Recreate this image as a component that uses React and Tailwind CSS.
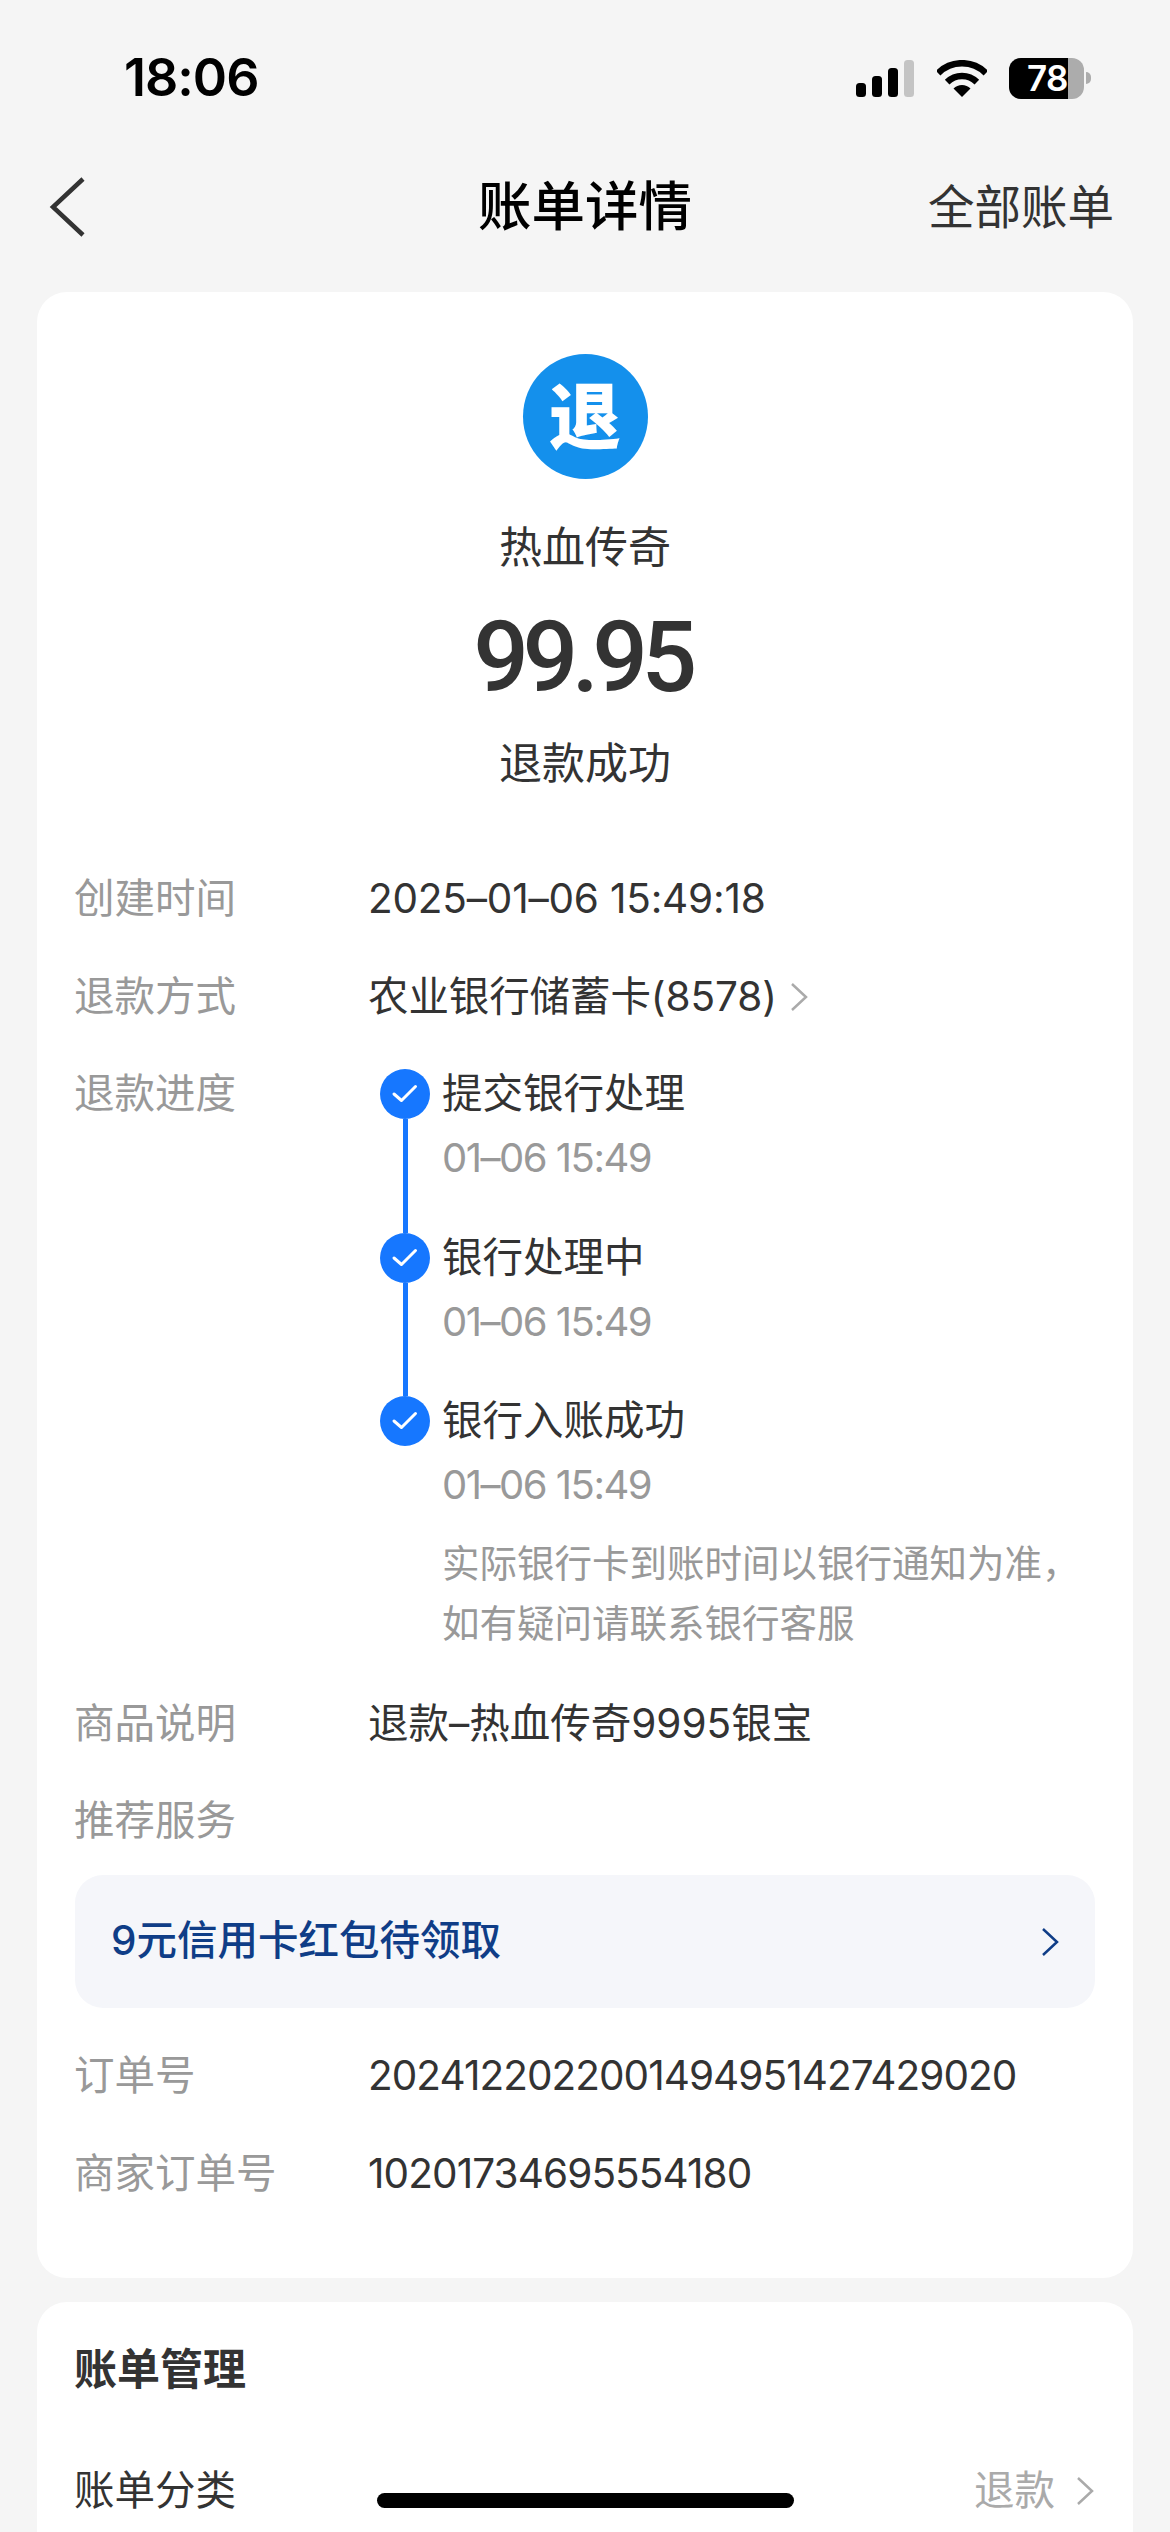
import React from 'react';

const STEPS = [
  { title: '提交银行处理', time: '01–06 15:49' },
  { title: '银行处理中', time: '01–06 15:49' },
  { title: '银行入账成功', time: '01–06 15:49' },
];

function Chevron({ className, color = '#aaaaaa' }) {
  return (
    <svg className={className} viewBox="0 0 20 30" fill="none">
      <path d="M3 2 L17 15 L3 28" stroke={color} strokeWidth="2.5" />
    </svg>
  );
}

function Check() {
  return (
    <svg className="h-[50px] w-[50px] shrink-0" viewBox="0 0 50 50">
      <circle cx="25" cy="25" r="25" fill="#1677ff" />
      <path d="M14 25 L21.5 31.5 L35.5 17.5" fill="none" stroke="#fff" strokeWidth="3" strokeLinecap="round" strokeLinejoin="round" />
    </svg>
  );
}

function StatusIcons() {
  return (
    <div className="flex items-center">
      <svg className="h-[37px] w-[58px]" viewBox="0 0 58 37">
        <rect x="0" y="23" width="10" height="14" rx="3.5" fill="#000" />
        <rect x="16" y="16" width="10" height="21" rx="3.5" fill="#000" />
        <rect x="32" y="8" width="10" height="29" rx="3.5" fill="#000" />
        <rect x="48" y="0" width="10" height="37" rx="3.5" fill="#c4c4c4" />
      </svg>
      <svg className="ml-[23px] h-[37px] w-[50px]" viewBox="0 0 50 37" fill="none">
        <path d="M1.1 13.1 A33.75 33.75 0 0 1 48.9 13.1" stroke="#000" strokeWidth="6.5" />
        <path d="M10.15 22.15 A21 21 0 0 1 39.85 22.15" stroke="#000" strokeWidth="6.5" />
        <path d="M25 37 L16.5 28.5 A12 12 0 0 1 33.5 28.5 Z" fill="#000" />
      </svg>
      <div className="ml-[22px] flex h-[41px] w-[75px] rounded-[12px] bg-[#acacac]">
        <div className="flex h-full w-[59px] items-center justify-end rounded-l-[12px] bg-black text-[35px] leading-none font-semibold tracking-[-0.5px] text-white">
          78
        </div>
      </div>
      <div className="ml-[2px] h-[12px] w-[5px] rounded-r-full bg-[#acacac]" />
    </div>
  );
}

function Row({ label, children }) {
  return (
    <div className="flex h-[60px] items-center text-[40.5px] leading-[60px]">
      <div className="-ml-px w-[294px] shrink-0 text-[#999999]">{label}</div>
      <div className="flex items-center text-[#333333]">{children}</div>
    </div>
  );
}

function Timeline() {
  return (
    <div className="mt-[5px] ml-[12px] flex flex-col">
      {STEPS.map((s, i) => (
        <div key={s.title} className={i < 2 ? 'flex h-[163.5px]' : 'flex'}>
          <div className="flex w-[50px] shrink-0 flex-col items-center">
            <Check />
            {i < 2 && <div className="w-[5px] flex-1 bg-[#1677ff]" />}
          </div>
          <div className="ml-[12px]">
            <div className="text-[40.5px] leading-[50px] text-[#333333]">{s.title}</div>
            <div className="mt-[14px] text-[40px] leading-[50px] tracking-[-1.5px] text-[#999999]">{s.time}</div>
            {i === 2 && (
              <div className="mt-[24px] text-[37.5px] leading-[60px] whitespace-nowrap text-[#999999]">
                <div>实际银行卡到账时间以银行通知为准，</div>
                <div>如有疑问请联系银行客服</div>
              </div>
            )}
          </div>
        </div>
      ))}
    </div>
  );
}

export default function App() {
  return (
    <div className="relative h-[2532px] w-[1170px] overflow-hidden bg-[#f5f5f5] font-['Inter','Noto_Sans_CJK_SC',sans-serif]">
      {/* status bar */}
      <div className="flex h-[156px] items-center justify-between pr-[79px] pl-[124px]">
        <span className="text-[52px] leading-none font-semibold tracking-[-1px] text-black">18:06</span>
        <StatusIcons />
      </div>

      {/* nav */}
      <div className="grid h-[102px] grid-cols-[1fr_auto_1fr] items-center">
        <div className="pl-[49px]">
          <svg className="h-[60px] w-[38px]" viewBox="0 0 38 60" fill="none">
            <path d="M34 2 L4 30 L34 58" stroke="#333333" strokeWidth="4.5" />
          </svg>
        </div>
        <div className="text-[53.5px] leading-none font-medium text-black">账单详情</div>
        <div className="pr-[56px] text-right text-[46.5px] leading-none text-[#333333]">全部账单</div>
      </div>

      {/* detail card */}
      <div className="mx-[37px] mt-[34px] rounded-[30px] bg-white px-[38px] pt-[62px] pb-[74px]">
        <div className="flex flex-col items-center">
          <div className="flex h-[125px] w-[125px] items-center justify-center rounded-full bg-[#1490ec] text-[72px] leading-none font-black text-white">
            退
          </div>
          <div className="mt-[38px] text-[43px] leading-[60px] text-[#333333]">热血传奇</div>
          <div className="mt-[31px] mr-[6px] font-['Roboto'] text-[98px] leading-[100px] font-medium tracking-[-6.5px] text-[#333333]">99.95</div>
          <div className="mt-[25px] text-[43px] leading-[60px] text-[#333333]">退款成功</div>
        </div>

        <div className="mt-[76px]">
          <Row label="创建时间"><span className="tracking-[-0.2px]">2025–01–06 15:49:18</span></Row>
          <div className="mt-[38px]">
            <Row label="退款方式">
              <span className="tracking-[-0.1px]">农业银行储蓄卡(8578)</span>
              <Chevron className="ml-[12px] h-[30px] w-[20px]" />
            </Row>
          </div>
          <div className="mt-[37px] flex">
            <div className="-ml-px h-[60px] w-[294px] shrink-0 text-[40.5px] leading-[60px] text-[#999999]">退款进度</div>
            <Timeline />
          </div>
          <div className="mt-[40px]">
            <Row label="商品说明">退款–热血传奇9995银宝</Row>
          </div>
          <div className="mt-[37px]">
            <Row label="推荐服务" />
          </div>

          <div className="mt-[24px] flex h-[133px] items-center justify-between rounded-[28px] bg-[#f5f6fa] pr-[35px] pl-[36px]">
            <span className="text-[40.5px] font-medium text-[#0f3d87]">9元信用卡红包待领取</span>
            <Chevron className="h-[30px] w-[20px]" color="#0f3d87" />
          </div>

          <div className="mt-[38px]">
            <Row label="订单号"><span className="tracking-[-0.95px]">2024122022001494951427429020</span></Row>
          </div>
          <div className="mt-[38px]">
            <Row label="商家订单号"><span className="tracking-[-0.9px]">10201734695554180</span></Row>
          </div>
        </div>
      </div>

      {/* bill management card */}
      <div className="mx-[37px] mt-[24px] rounded-[30px] bg-white px-[38px] pt-[37px] pb-[60px]">
        <div className="-ml-px text-[43px] leading-[60px] font-semibold text-[#333333]">账单管理</div>
        <div className="mt-[62px] flex h-[60px] items-center justify-between text-[40.5px]">
          <span className="-ml-px text-[#333333]">账单分类</span>
          <span className="flex items-center text-[#aaaaaa]">
            退款
            <Chevron className="ml-[20px] h-[30px] w-[20px]" />
          </span>
        </div>
      </div>

      {/* home indicator */}
      <div className="absolute top-[2493px] left-[377px] h-[15px] w-[417px] rounded-full bg-black" />
    </div>
  );
}
